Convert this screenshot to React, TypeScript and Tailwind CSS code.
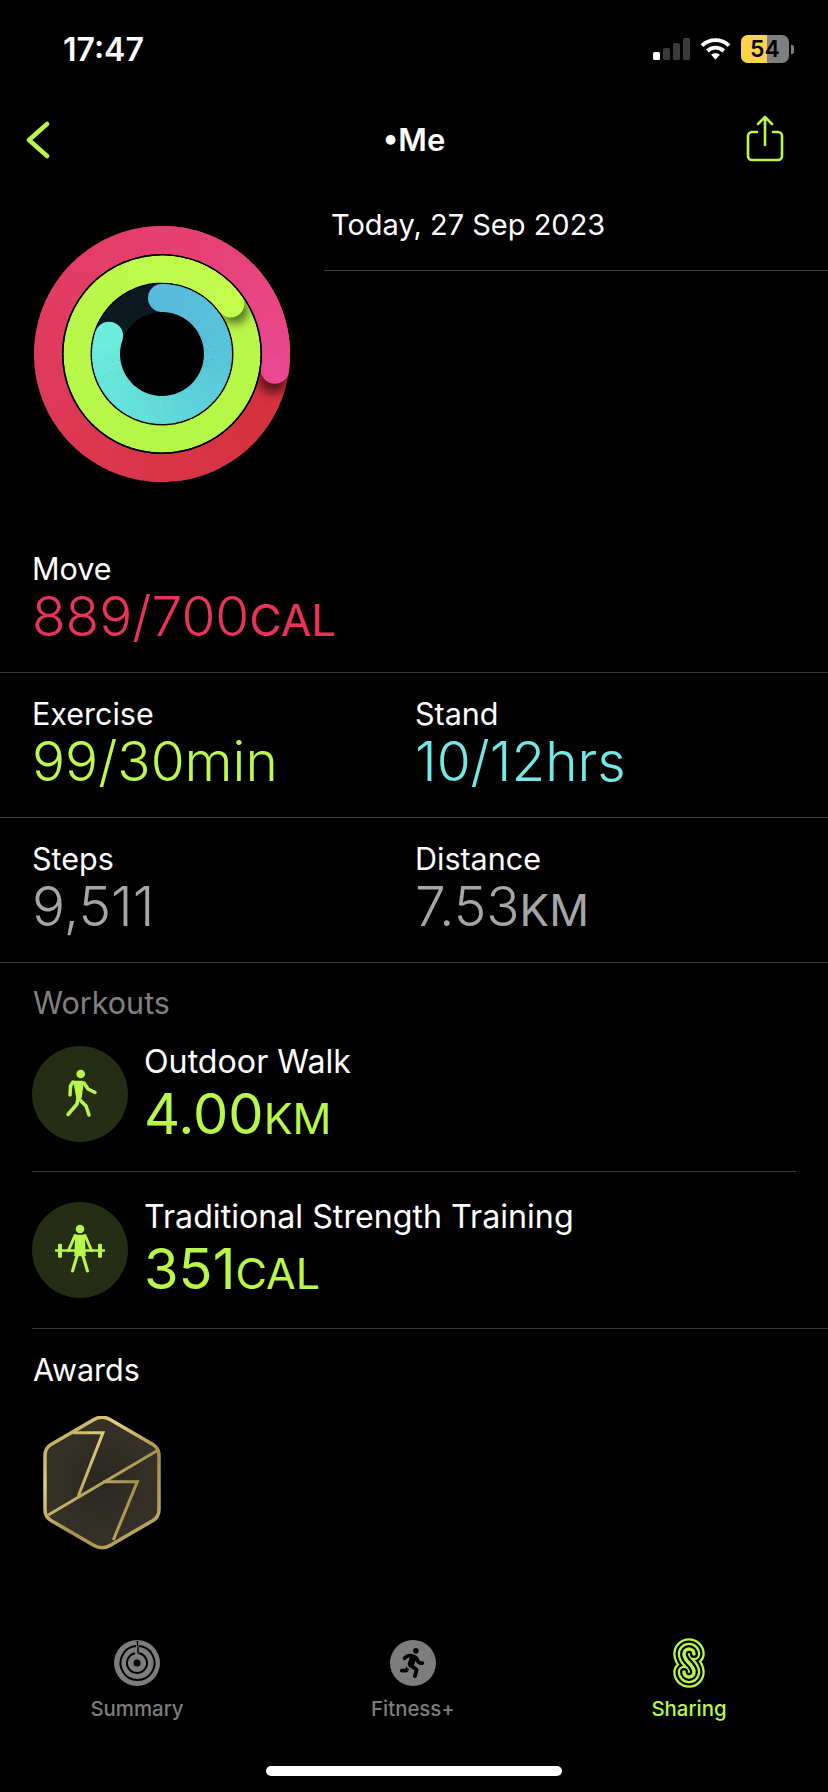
import React from 'react';
import { FaPersonRunning } from 'react-icons/fa6';

const LIME = '#b9f84a';

type Stop = [number, string];

function hex(c: string) {
  return [1, 3, 5].map((i) => parseInt(c.slice(i, i + 2), 16));
}

function colorAt(stops: Stop[], a: number) {
  for (let i = 0; i < stops.length - 1; i++) {
    const [a0, c0] = stops[i];
    const [a1, c1] = stops[i + 1];
    if (a >= a0 && a <= a1) {
      const t = (a - a0) / (a1 - a0);
      const x = hex(c0);
      const y = hex(c1);
      const m = x.map((v, k) => Math.round(v + (y[k] - v) * t));
      return `rgb(${m[0]},${m[1]},${m[2]})`;
    }
  }
  return stops[stops.length - 1][1];
}

function pt(r: number, deg: number) {
  const rad = ((deg - 90) * Math.PI) / 180;
  return [r * Math.cos(rad), r * Math.sin(rad)];
}

function arc(r: number, a0: number, a1: number) {
  const [x0, y0] = pt(r, a0);
  const [x1, y1] = pt(r, a1);
  return `M${x0.toFixed(2)} ${y0.toFixed(2)}A${r} ${r} 0 0 1 ${x1.toFixed(2)} ${y1.toFixed(2)}`;
}

// one ring, drawn as short arc pieces because svg has no conic gradient
function Ring({ r, w, from, to, stops, round }: { r: number; w: number; from: number; to: number; stops: Stop[]; round?: boolean }) {
  const pieces = [];
  for (let a = from; a < to; a += 3) {
    pieces.push(
      <path key={a} d={arc(r, a, Math.min(a + 3.6, to))} stroke={colorAt(stops, a)} strokeWidth={w} fill="none" />,
    );
  }
  const [sx, sy] = pt(r, from);
  const [ex, ey] = pt(r, to);
  return (
    <g>
      {round ? <circle cx={sx} cy={sy} r={w / 2} fill={colorAt(stops, from)} /> : null}
      {pieces}
      {round ? <circle cx={ex} cy={ey} r={w / 2} fill={colorAt(stops, to)} /> : null}
    </g>
  );
}

function HeadShadow({ r, w, at }: { r: number; w: number; at: number }) {
  const [x, y] = pt(r, at + 5);
  return <circle cx={x} cy={y} r={w / 2} fill="#000" fillOpacity={0.55} filter="url(#headBlur)" />;
}

function ActivityRings() {
  return (
    <svg width="260" height="260" viewBox="-130 -130 260 260" className="shrink-0">
      <defs>
        <filter id="headBlur" x="-60%" y="-60%" width="220%" height="220%">
          <feGaussianBlur stdDeviation="5" />
        </filter>
        <clipPath id="greenClip">
          <circle r="98.5" />
        </clipPath>
      </defs>
      <Ring r={114} w={28} from={0} to={360} stops={[[0, '#e5406f'], [100, '#d4303c'], [180, '#d93548'], [270, '#e03a5c'], [360, '#e5406f']]} />
      <HeadShadow r={114} w={28} at={98} />
      <Ring r={114} w={28} from={0} to={98} stops={[[0, '#e5406f'], [98, '#ea4890']]} round />
      <circle r={100} fill="#000" />
      <g clipPath="url(#greenClip)">
        <Ring r={85} w={27} from={0} to={360} stops={[[0, '#bdfa4b'], [180, '#b4f648'], [360, '#bdfa4b']]} />
        <HeadShadow r={85} w={27} at={54} />
        <Ring r={85} w={27} from={0} to={54} stops={[[0, '#bdfa4b'], [54, '#c4fc4e']]} round />
      </g>
      <circle r={71} fill="#000" />
      <circle r={56} fill="none" stroke="#0a1a20" strokeWidth={28} />
      <Ring r={56} w={28} from={0} to={289} stops={[[0, '#58bcdc'], [90, '#58c4dc'], [180, '#62dcd8'], [289, '#6ceede']]} round />
    </svg>
  );
}

function Stat({ label, value, unit, color }: { label: string; value: string; unit?: string; color: string }) {
  return (
    <div>
      <div className="text-[30.5px] leading-[36px] text-white">{label}</div>
      <div className="text-[55px] leading-[58px] font-[350]" style={{ color }}>
        {value}
        {unit ? <span className="text-[44px] font-normal">{unit}</span> : null}
      </div>
    </div>
  );
}

function WalkIcon() {
  return (
    <svg width="96" height="96" viewBox="0 0 96 96" fill="none" stroke={LIME} strokeWidth="3.500" strokeLinecap="round" strokeLinejoin="round">
      <circle cx="48.700" cy="28" r="4.300" fill={LIME} stroke="none" />
      <path d="M42 35.500h8l1 1-2 15h-4z" fill={LIME} strokeWidth="1.500" />
      <path d="M41 36l-2.500 4-.5 9" />
      <path d="M52 37l4 6 7 3.500" />
      <path d="M46 52l-1 6-9 10.500" />
      <path d="M47 53l7 7 3 9" />
    </svg>
  );
}

function LiftIcon() {
  return (
    <svg width="96" height="96" viewBox="0 0 96 96" fill="none" stroke={LIME} strokeWidth="3" strokeLinecap="round" strokeLinejoin="round">
      <circle cx="48" cy="27" r="4.300" fill={LIME} stroke="none" />
      <path d="M23 48.500h50" strokeWidth="2.500" strokeLinecap="butt" />
      <rect x="26" y="41.700" width="4" height="14" rx="1" fill={LIME} stroke="none" />
      <rect x="66" y="41.700" width="4" height="14" rx="1" fill={LIME} stroke="none" />
      <path d="M44 33.500h8l1 20H43z" fill={LIME} strokeWidth="1.500" />
      <path d="M43 33.500l-6.500 15" />
      <path d="M53 33.500l6.500 15" />
      <path d="M45 54l-4.500 15" />
      <path d="M51 54l4.500 15" />
    </svg>
  );
}

function Workout({ icon, title, value, unit, textClass }: { icon: React.ReactNode; title: string; value: string; unit: string; textClass: string }) {
  return (
    <div className="flex items-center gap-[16px]">
      <div className="w-24 h-24 rounded-full bg-[#252e15] shrink-0">{icon}</div>
      <div className={textClass}>
        <div className="text-[32.2px] leading-[36px] text-white">{title}</div>
        <div className="mt-[4px] text-[56px] leading-[60px] text-[#b9f84a]">
          {value}
          <span className="text-[43px]">{unit}</span>
        </div>
      </div>
    </div>
  );
}

function Badge() {
  return (
    <svg width="118" height="134" viewBox="0 0 118 134" fill="none">
      <defs>
        <linearGradient id="gold" x1="0" y1="0" x2="118" y2="134" gradientUnits="userSpaceOnUse">
          <stop offset="0" stopColor="#a8964e" />
          <stop offset="0.3" stopColor="#e0ce78" />
          <stop offset="0.6" stopColor="#a39050" />
          <stop offset="1" stopColor="#c8b45e" />
        </linearGradient>
        <radialGradient id="plate" cx="0.5" cy="0.5" r="0.6">
          <stop offset="0" stopColor="#2b2821" />
          <stop offset="1" stopColor="#37332a" />
        </radialGradient>
      </defs>
      <path
        d="M51 3.500q8-4.500 16 0l43 25q6 3.500 6 11v54q0 7.500-6 11l-43 25q-8 4.500-16 0l-43-25q-6-3.500-6-11v-54q0-7.500 6-11z"
        fill="url(#plate)"
        stroke="url(#gold)"
        strokeWidth="3.500"
      />
      <g stroke="url(#gold)" strokeWidth="3">
        <path d="M30 16.700h30L35.300 80" />
        <path d="M115.300 34L5.300 99" />
        <path d="M60 65.700h34.300L70.300 124" />
      </g>
    </svg>
  );
}

function SummaryIcon() {
  return (
    <svg width="46" height="46" viewBox="0 0 46 46" fill="none">
      <circle cx="23" cy="23" r="23" fill="#7d7d7d" />
      <g stroke="#000" strokeWidth="2">
        <path d="M25 6.100a17 17 0 1 1-3 0" />
        <path d="M25 13.200a10 10 0 1 1-4 0" />
      </g>
      <path d="M23.500 1v5M24 6.500v7" stroke="#000" strokeWidth="1.500" />
      <circle cx="23" cy="23" r="3.500" fill="#000" />
    </svg>
  );
}

function FitnessIcon() {
  return (
    <div className="w-[46px] h-[46px] rounded-full bg-[#7d7d7d] flex items-center justify-center">
      <FaPersonRunning size={30} color="#000" />
    </div>
  );
}

function SharingIcon() {
  const d = 'M21 16a5 5 0 0 0-10 0c0 8 10 10 10 18a5 5 0 0 1-10 0';
  return (
    <svg width="32" height="50" viewBox="0 0 32 50" fill="none" strokeLinecap="round">
      <path d={d} stroke={LIME} strokeWidth="21.500" />
      <path d={d} stroke="#000" strokeWidth="17" />
      <path d={d} stroke={LIME} strokeWidth="12.500" />
      <path d={d} stroke="#000" strokeWidth="8" />
      <path d={d} stroke={LIME} strokeWidth="3.500" />
    </svg>
  );
}

function Tab({ icon, label, color }: { icon: React.ReactNode; label: string; color: string }) {
  return (
    <div className="flex flex-col items-center w-[120px]">
      <div className="h-[56px] flex items-center justify-center">{icon}</div>
      <div className="text-[20.4px] leading-[24px] mt-[6px] font-medium" style={{ color }}>
        {label}
      </div>
    </div>
  );
}

export default function App() {
  return (
    <div className="w-[828px] h-[1792px] bg-black overflow-hidden flex flex-col" style={{ fontFamily: 'Inter, sans-serif' }}>
      {/* status bar */}
      <div className="h-[100px] flex items-start justify-between pl-[63px] pr-[34px] pt-[31px]">
        <span className="text-[32px] leading-[38px] font-semibold text-white">17:47</span>
        <div className="h-[36px] flex items-center gap-[10px]">
          <div className="flex items-end gap-[3px]">
            <div className="w-[7px] h-[8px] rounded-[1.5px] bg-white" />
            <div className="w-[7px] h-[12px] rounded-[1.5px] bg-[#3a3a3a]" />
            <div className="w-[7px] h-[17px] rounded-[1.5px] bg-[#3a3a3a]" />
            <div className="w-[7px] h-[22px] rounded-[1.5px] bg-[#3a3a3a]" />
          </div>
          <svg width="31" height="24" viewBox="0 0 32 24" fill="none" stroke="#fff" strokeWidth="4">
            <path d="M2 8.500c8-7.500 20-7.500 28 0" />
            <path d="M7.500 14c5-4.500 12-4.500 17 0" />
            <path d="M16 23l-4.500-5c2.500-2 6.500-2 9 0z" fill="#fff" stroke="none" />
          </svg>
          <div className="flex items-center gap-[2px]">
            <div className="relative w-[48px] h-[28px] rounded-[7px] bg-[#7f7f7f] overflow-hidden flex items-center justify-center">
              <div className="absolute left-0 top-0 bottom-0 w-[26px] bg-[#fad44a]" />
              <span className="relative text-[23px] leading-none font-semibold text-black">54</span>
            </div>
            <div className="w-[3px] h-[9px] rounded-r-[2px] bg-[#7f7f7f]" />
          </div>
        </div>
      </div>

      {/* nav */}
      <div className="h-[80px] grid grid-cols-[1fr_auto_1fr] items-center">
        <svg className="ml-[26px]" width="24" height="38" viewBox="0 0 24 38" fill="none" stroke={LIME} strokeWidth="4.500" strokeLinecap="round" strokeLinejoin="round">
          <path d="M21 3L3 19l18 16" />
        </svg>
        <span className="text-[31px] font-semibold text-white">•Me</span>
        <svg className="justify-self-end mr-[44px] mb-[2px]" width="38" height="48" viewBox="0 0 38 48" fill="none" stroke={LIME} strokeWidth="2.600" strokeLinecap="round" strokeLinejoin="round">
          <path d="M11 17H6a4 4 0 0 0-4 4v20a4 4 0 0 0 4 4h26a4 4 0 0 0 4-4V21a4 4 0 0 0-4-4h-5" />
          <path d="M19 30V2M12 9l7-7 7 7" />
        </svg>
      </div>

      {/* rings and date */}
      <div className="flex pl-[32px] h-[351px]">
        <div className="pt-[44px]">
          <ActivityRings />
        </div>
        <div className="flex-1 ml-[32px] h-[91px] border-b border-[#3a3a3c] pt-[27px] pl-[7px] text-[29px] leading-[36px] text-white">
          Today, 27 Sep 2023
        </div>
      </div>

      <div className="pl-[32px] h-[142px] border-b border-[#3a3a3c] pt-[20px]">
        <Stat label="Move" value="889/700" unit="CAL" color="#ea3358" />
      </div>
      <div className="pl-[32px] h-[145px] border-b border-[#3a3a3c] pt-[23px] grid grid-cols-[383px_1fr]">
        <Stat label="Exercise" value="99/30min" color="#bdf94c" />
        <Stat label="Stand" value="10/12hrs" color="#72e8e8" />
      </div>
      <div className="pl-[32px] h-[145px] border-b border-[#3a3a3c] pt-[23px] grid grid-cols-[383px_1fr]">
        <Stat label="Steps" value="9,511" color="#a6a6a6" />
        <Stat label="Distance" value="7.53" unit="KM" color="#a6a6a6" />
      </div>

      {/* workouts */}
      <div className="pl-[33px] pt-[22px] text-[30.5px] leading-[36px] text-[#808080]">Workouts</div>
      <div className="ml-[32px] mr-[32px] h-[151px] pb-[5px] flex items-center border-b border-[#3a3a3c]">
        <Workout icon={<WalkIcon />} title="Outdoor Walk" value="4.00" unit="KM" textClass="mt-[5px]" />
      </div>
      <div className="ml-[32px] h-[157px] flex items-center border-b border-[#3a3a3c]">
        <Workout icon={<LiftIcon />} title="Traditional Strength Training" value="351" unit="CAL" textClass="mt-[2px]" />
      </div>

      {/* awards */}
      <div className="pl-[33px] pt-[23px] text-[30.5px] leading-[36px] text-white">Awards</div>
      <div className="pl-[43px] pt-[28px]">
        <Badge />
      </div>

      {/* tab bar */}
      <div className="mt-auto flex justify-between pl-[77px] pr-[79px]">
        <Tab icon={<SummaryIcon />} label="Summary" color="#7d7d7d" />
        <Tab icon={<FitnessIcon />} label="Fitness+" color="#7d7d7d" />
        <Tab icon={<SharingIcon />} label="Sharing" color={LIME} />
      </div>
      <div className="flex justify-center pt-[45px] pb-[16px]">
        <div className="w-[296px] h-[10px] rounded-full bg-white" />
      </div>
    </div>
  );
}
